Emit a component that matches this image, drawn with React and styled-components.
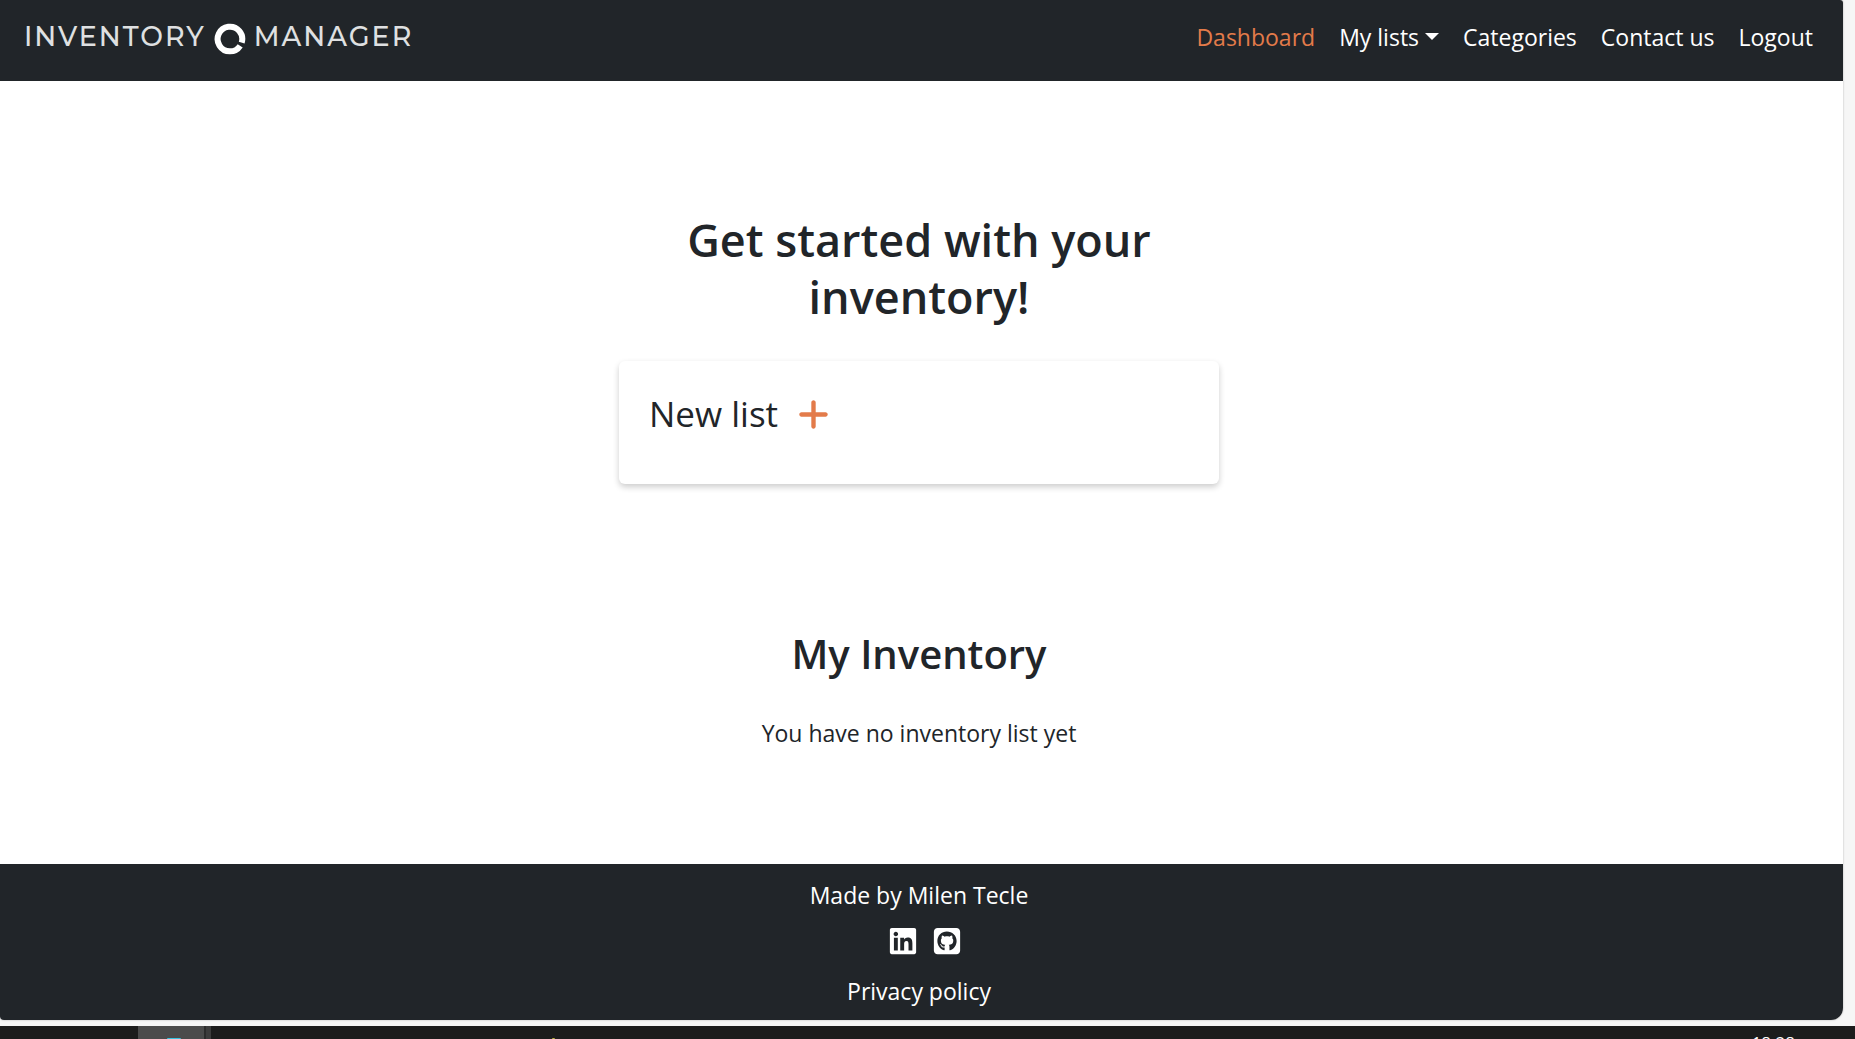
import React from "react";
import styled, { createGlobalStyle } from "styled-components";
import { FaPlus, FaLinkedin, FaSquareGithub } from "react-icons/fa6";

const ink = "#212529";
const accent = "#e37b4a";

const GlobalStyle = createGlobalStyle`
  *, *::before, *::after { box-sizing: border-box; }
  body {
    margin: 0;
    background: #f6f6f6;
    color: ${ink};
    font-family: "Segoe UI", "Open Sans", "Noto Sans", sans-serif;
    font-size: 23px;
    line-height: 36px;
  }
  a { color: inherit; text-decoration: none; }
`;

const Screen = styled.div`
  display: flex;
  flex-direction: column;
  height: 100vh;
  overflow: hidden;
`;

const Page = styled.div`
  flex: 1;
  display: flex;
  flex-direction: column;
  margin: 0 12px 6px 0;
  background: #fff;
  border-radius: 0 3px 12px 4px;
  overflow: hidden;
  box-shadow: 0 0 2px rgba(0, 0, 0, 0.3);
`;

const Navbar = styled.header`
  display: flex;
  align-items: center;
  justify-content: space-between;
  height: 81px;
  padding: 0 18px 8px 24px;
  background: ${ink};
  color: #fff;
`;

const Brand = styled.a`
  display: flex;
  align-items: center;
  gap: 8px;
  font-family: Montserrat, Inter, sans-serif;
  font-size: 27px;
  font-weight: 500;
  letter-spacing: 2px;
  color: #dfe0e1;
`;

const Mark = styled.svg`
  display: block;
  margin-top: 4px;
`;

const Nav = styled.nav`
  display: flex;
`;

const NavLink = styled.a`
  padding: 0 12px;
  color: ${(p) => (p.$active ? accent : "#fff")};
`;

const NavButton = styled.button`
  display: flex;
  align-items: center;
  gap: 6px;
  padding: 0 12px;
  border: 0;
  background: none;
  color: #fff;
  font: inherit;
`;

const Caret = styled.span`
  border: 7px solid transparent;
  border-top-color: #fff;
  border-bottom: 0;
`;

const Main = styled.main`
  flex: 1;
  display: flex;
  flex-direction: column;
  align-items: center;
  padding: 130px 5px 0 0;
  text-align: center;
`;

const Column = styled.div`
  width: 600px;
  max-width: 100%;
`;

const Title = styled.h1`
  margin: 0 0 36px;
  font-size: 45px;
  font-weight: 600;
  line-height: 57px;
`;

const Card = styled.section`
  display: flex;
  height: 123px;
  padding: 31px 30px;
  border-radius: 6px;
  box-shadow: 0 3px 6px rgba(0, 0, 0, 0.2);
`;

const NewList = styled.a`
  display: flex;
  align-items: center;
  gap: 18px;
  height: 44px;
  font-size: 35px;
  font-weight: 500;
`;

const Subtitle = styled.h2`
  margin: 144px 0 35px;
  font-size: 40px;
  font-weight: 600;
  line-height: 52px;
`;

const Note = styled.p`
  margin: 0;
`;

const Footer = styled.footer`
  display: flex;
  flex-direction: column;
  align-items: center;
  height: 156px;
  padding: 13px 5px 0 0;
  background: ${ink};
  color: #fff;
`;

const Socials = styled.div`
  display: flex;
  gap: 14px;
  padding: 13px 0 17px 12px;
  font-size: 30px;
  a { display: flex; }
`;

const Taskbar = styled.div`
  display: flex;
  align-items: flex-start;
  height: 13px;
  padding: 0 60px 0 138px;
  background: #1c1c1c;
  overflow: hidden;
`;

const TaskButton = styled.button`
  display: flex;
  align-items: flex-end;
  width: 73px;
  height: 13px;
  padding: 0 0 0 29px;
  border: 0;
  background: linear-gradient(90deg, #4b4b4b 66px, #2c2c2c 66px 68px, #3c3c3c 68px);
`;

const AppEdge = styled.span`
  width: ${(p) => p.$width}px;
  height: ${(p) => p.$height}px;
  border-radius: 6px 6px 0 0;
  background: ${(p) => p.$color};
`;

const TaskIcon = styled.div`
  display: flex;
  align-items: flex-end;
  height: 13px;
  margin-left: 341px;
`;

const Clock = styled.time`
  margin: 5px 0 0 auto;
  color: #fff;
  font-size: 17px;
  line-height: 24px;
`;

function LogoMark() {
  return (
    <Mark width="32" height="32" viewBox="0 0 32 32" fill="none" aria-hidden="true">
      <path d="M27.7 19.6A12.3 12.3 0 1 0 26.2 22.8" stroke="#fff" strokeWidth="6" />
    </Mark>
  );
}

export default function App() {
  return (
    <Screen>
      <GlobalStyle />
      <Page>
        <Navbar>
          <Brand href="#">
            <span>INVENTORY</span>
            <LogoMark />
            <span>MANAGER</span>
          </Brand>
          <Nav>
            <NavLink href="#" $active>Dashboard</NavLink>
            <NavButton type="button">My lists<Caret /></NavButton>
            <NavLink href="#">Categories</NavLink>
            <NavLink href="#">Contact us</NavLink>
            <NavLink href="#">Logout</NavLink>
          </Nav>
        </Navbar>
        <Main>
          <Column>
            <Title>Get started with your inventory!</Title>
            <Card>
              <NewList href="#">
                New list
                <FaPlus color={accent} />
              </NewList>
            </Card>
            <Subtitle>My Inventory</Subtitle>
            <Note>You have no inventory list yet</Note>
          </Column>
        </Main>
        <Footer>
          <span>Made by Milen Tecle</span>
          <Socials>
            <a href="#" aria-label="LinkedIn"><FaLinkedin /></a>
            <a href="#" aria-label="GitHub"><FaSquareGithub /></a>
          </Socials>
          <a href="#">Privacy policy</a>
        </Footer>
      </Page>
      <Taskbar>
        <TaskButton type="button" aria-label="Browser">
          <AppEdge $width={14} $height={1} $color="#35c3e0" />
        </TaskButton>
        <TaskIcon>
          <AppEdge $width={3} $height={1} $color="#b9b040" />
        </TaskIcon>
        <Clock>18:28</Clock>
      </Taskbar>
    </Screen>
  );
}
